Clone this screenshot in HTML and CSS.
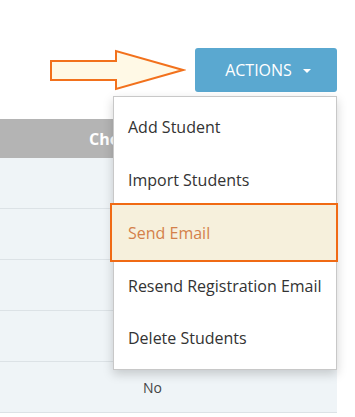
FILE: index.html
```html
<!DOCTYPE html>
<html>
<head>
<meta charset="utf-8">
<link rel="stylesheet" href="styles.css">
</head>
<body>
<div class="page">
  <div class="toolbar">
    <svg class="arrow" width="136" height="42" viewBox="0 0 136 42">
      <polygon points="1,12 66,12 66,2 133,21 66,40 66,31 1,31" fill="#fff9e6" stroke="#f2711c" stroke-width="2" stroke-linejoin="miter"/>
    </svg>
    <div class="actions">
      <button class="btn">ACTIONS <span class="caret"></span></button>
      <ul class="menu">
        <li class="item">Add Student</li>
        <li class="item">Import Students</li>
        <li class="item active">Send Email</li>
        <li class="item">Resend Registration Email</li>
        <li class="item">Delete Students</li>
      </ul>
    </div>
  </div>
  <div class="table">
    <div class="thead"><span class="th">Choice</span></div>
    <div class="row"></div>
    <div class="row"></div>
    <div class="row"></div>
    <div class="row"></div>
    <div class="row"><span class="cell">No</span></div>
  </div>
</div>
</body>
</html>
```
FILE: styles.css
```css
html, body {
  margin: 0;
  padding: 0;
  background: #fff;
}
body {
  font-family: "Open Sans", "Liberation Sans", sans-serif;
  color: #333;
  width: 355px;
  height: 417px;
  overflow: hidden;
}
.page {
  width: 355px;
}
.toolbar {
  display: flex;
  justify-content: flex-end;
  align-items: center;
  gap: 9px;
  padding-top: 48px;
  padding-right: 18px;
  height: 44px;
}
.arrow {
  display: block;
  margin-top: -1px;
}
.actions {
  position: relative;
  z-index: 2;
}
.btn {
  display: flex;
  align-items: center;
  justify-content: center;
  gap: 11px;
  width: 142px;
  height: 44px;
  border: none;
  border-radius: 3px;
  background: #5aa8d0;
  color: #fff;
  font-family: "Open Sans", "Liberation Sans", sans-serif;
  font-size: 16px;
  padding: 0 0 0 4px;
  margin: 0;
}
.caret {
  display: inline-block;
  width: 0;
  height: 0;
  border-left: 4.5px solid transparent;
  border-right: 4.5px solid transparent;
  border-top: 4.5px solid #fff;
  margin-top: 1px;
}
.menu {
  position: absolute;
  top: 48px;
  right: 0;
  width: 222px;
  margin: 0;
  padding: 4px 0;
  list-style: none;
  background: #fff;
  border: 1px solid #c8c8c8;
  box-shadow: 0 4px 10px rgba(0, 0, 0, 0.18);
}
.item {
  position: relative;
  height: 52.75px;
  display: flex;
  align-items: center;
  padding-left: 14px;
  font-size: 16px;
  color: #333;
}
.item.active {
  color: #d4804a;
  z-index: 1;
  isolation: isolate;
}
.item.active::before {
  content: "";
  position: absolute;
  left: -4px;
  right: -2px;
  top: -4px;
  bottom: -3px;
  background: #f6f0dc;
  border: 2px solid #f06a14;
  z-index: -1;
}
.table {
  margin-top: 27px;
  width: 337px;
}
.thead {
  height: 39px;
  background: #b4b4b4;
  display: flex;
  align-items: center;
  padding-left: 89px;
}
.th {
  color: #fff;
  font-weight: 700;
  font-size: 16px;
}
.row {
  height: 50px;
  background: #eff4f7;
  border-bottom: 1px solid #dce2e6;
  display: flex;
  align-items: center;
  padding-left: 143px;
}
.cell {
  font-size: 14px;
  color: #444;
}
```
